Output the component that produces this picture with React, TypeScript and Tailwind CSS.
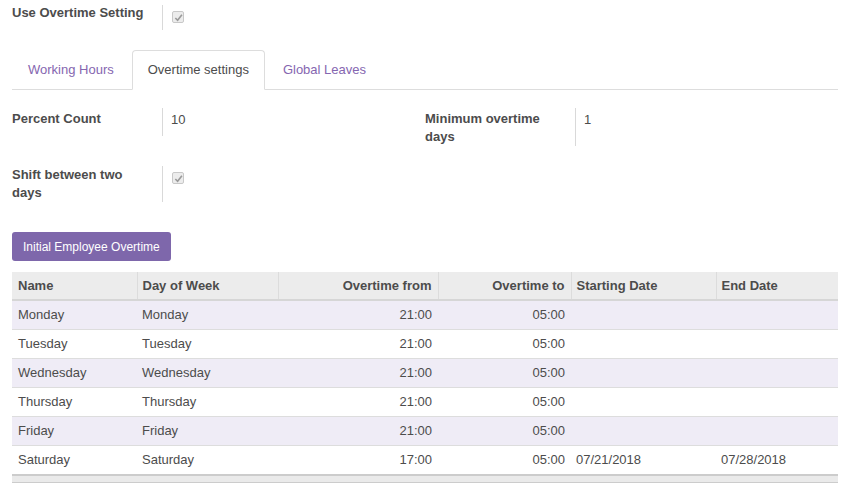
import React from 'react';

const rows = [
  { name: 'Monday', day: 'Monday', from: '21:00', to: '05:00', start: '', end: '' },
  { name: 'Tuesday', day: 'Tuesday', from: '21:00', to: '05:00', start: '', end: '' },
  { name: 'Wednesday', day: 'Wednesday', from: '21:00', to: '05:00', start: '', end: '' },
  { name: 'Thursday', day: 'Thursday', from: '21:00', to: '05:00', start: '', end: '' },
  { name: 'Friday', day: 'Friday', from: '21:00', to: '05:00', start: '', end: '' },
  { name: 'Saturday', day: 'Saturday', from: '17:00', to: '05:00', start: '07/21/2018', end: '07/28/2018' },
];

const Check = () => (
  <div className="w-[12px] h-[12px] rounded-[2px] border border-[#c8c8c8] bg-[#ececec] flex items-center justify-center">
    <svg width="9" height="9" viewBox="0 0 10 10">
      <path d="M1.5 5.5 L4 8 L8.8 2" fill="none" stroke="#9a9a9a" strokeWidth="1.8" />
    </svg>
  </div>
);

const Field: React.FC<{ label: string; minH: string; children: React.ReactNode }> = ({ label, minH, children }) => (
  <div className="flex">
    <div className="w-[150px] shrink-0 font-bold pt-[2px] pr-2">{label}</div>
    <div className={`border-l border-[#d9d9d9] pl-[8px] pt-[2px] ${minH}`}>{children}</div>
  </div>
);

export default function App() {
  return (
    <div
      className="w-[853px] h-[496px] bg-white text-[13px] leading-[18px] text-[#4c4c4c] overflow-hidden"
      style={{ fontFamily: '"Liberation Sans", Arial, sans-serif' }}
    >
      <div className="pl-3 pr-[15px]">
        <div className="flex pt-[5px]">
          <div className="w-[150px] shrink-0 font-bold -mt-px">Use Overtime Setting</div>
          <div className="border-l border-[#d9d9d9] pl-[9px] h-[25px] pt-[6px]">
            <Check />
          </div>
        </div>

        <div className="mt-[20px] flex border-b border-[#dddddd] pl-[1px]">
          <div className="px-[15px] h-[39px] flex items-center text-[#8566b0] mr-[3px]">Working Hours</div>
          <div className="px-[15px] h-[40px] -mb-px flex items-center bg-white border border-[#dddddd] border-b-white rounded-t-[4px] mr-[3px]">
            Overtime settings
          </div>
          <div className="px-[15px] h-[39px] flex items-center text-[#8566b0]">Global Leaves</div>
        </div>

        <div className="mt-[18px] grid grid-cols-2">
          <div>
            <Field label="Percent Count" minH="min-h-[28px]">
              <div className="pt-[1px]">10</div>
            </Field>
          </div>
          <div>
            <Field label="Minimum overtime days" minH="min-h-[38px]">
              <div className="pt-[1px]">1</div>
            </Field>
          </div>
        </div>

        <div className="mt-[20px] flex">
          <div className="w-[150px] shrink-0 font-bold pr-2">Shift between two days</div>
          <div className="border-l border-[#d9d9d9] pl-[9px] h-[36px] pt-[6px]">
            <Check />
          </div>
        </div>

        <button className="mt-[30px] h-[29px] px-[11px] bg-[#7e67ab] text-white text-[12px] rounded-[3px]">
          Initial Employee Overtime
        </button>

        <table className="mt-[11px] w-[826px] table-fixed border-collapse">
          <colgroup>
            <col className="w-[125px]" />
            <col className="w-[141px]" />
            <col className="w-[160px]" />
            <col className="w-[133px]" />
            <col className="w-[145px]" />
            <col className="w-[122px]" />
          </colgroup>
          <thead>
            <tr className="bg-[#ececec] h-[28px] border-b-2 border-[#d6d6d6]">
              <th className="text-left font-bold px-[6px]">Name</th>
              <th className="text-left font-bold px-[5px] border-l border-[#dcdcdc]">Day of Week</th>
              <th className="text-right font-bold px-[6px] border-l border-[#dcdcdc]">Overtime from</th>
              <th className="text-right font-bold px-[6px] border-l border-[#dcdcdc]">Overtime to</th>
              <th className="text-left font-bold px-[5px] border-l border-[#dcdcdc]">Starting Date</th>
              <th className="text-left font-bold px-[5px] border-l border-[#dcdcdc]">End Date</th>
            </tr>
          </thead>
          <tbody>
            {rows.map((r, i) => (
              <tr
                key={r.name}
                className={`h-[29px] ${i % 2 === 0 ? 'bg-[#efecf6]' : 'bg-white'} ${i < rows.length - 1 ? 'border-b border-[#dddddd]' : ''}`}
              >
                <td className="px-[6px]">{r.name}</td>
                <td className="px-[5px]">{r.day}</td>
                <td className="px-[6px] text-right">{r.from}</td>
                <td className="px-[6px] text-right">{r.to}</td>
                <td className="px-[5px]">{r.start}</td>
                <td className="px-[5px]">{r.end}</td>
              </tr>
            ))}
          </tbody>
        </table>
        <div className="w-[826px] h-[9px] bg-[#eaeaea] border-t-2 border-b border-[#cccccc]" />
      </div>
    </div>
  );
}
